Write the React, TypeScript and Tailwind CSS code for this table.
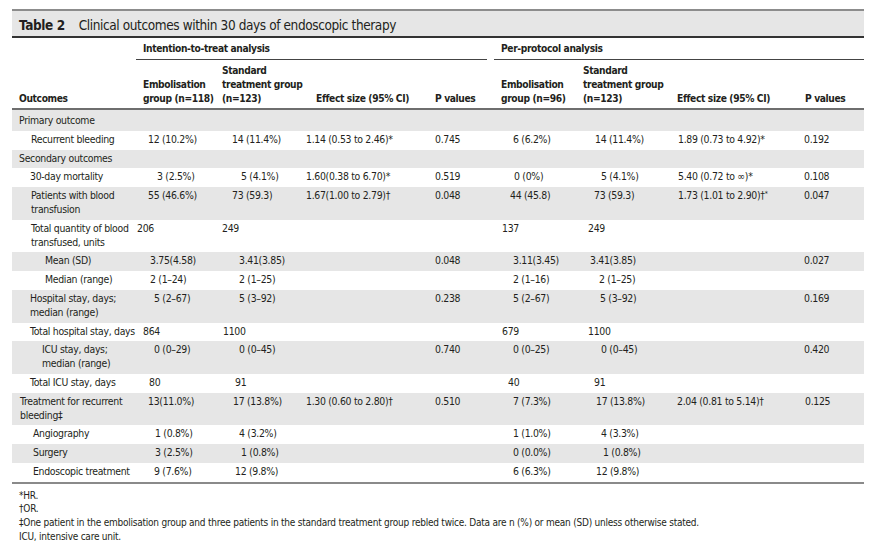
import React from "react";

type Cell = [string, string];
type Row = { g: boolean; cells: Cell[] };

const GRID = "grid grid-cols-[124px_82px_88px_124px_64px_84px_94px_128px_64px]";

const E: Cell = ["", "pl-0"];

const rows: Row[] = [
  {
    g: false,
    cells: [
      ["Recurrent bleeding", "pl-[19px]"],
      ["12 (10.2%)", "pl-[12px]"],
      ["14 (11.4%)", "pl-[14px]"],
      ["1.14 (0.53 to 2.46)*", "pl-0"],
      ["0.745", "pl-[5px]"],
      ["6 (6.2%)", "pl-[19px]"],
      ["14 (11.4%)", "pl-[17px]"],
      ["1.89 (0.73 to 4.92)*", "pl-[6px]"],
      ["0.192", "pl-[4px]"],
    ],
  },
  { g: true, cells: [["Secondary outcomes", "pl-[7px]"], E, E, E, E, E, E, E, E] },
  {
    g: false,
    cells: [
      ["30-day mortality", "pl-[18px]"],
      ["3 (2.5%)", "pl-[21px]"],
      ["5 (4.1%)", "pl-[23px]"],
      ["1.60(0.38 to 6.70)*", "pl-0"],
      ["0.519", "pl-[5px]"],
      ["0 (0%)", "pl-[20px]"],
      ["5 (4.1%)", "pl-[23px]"],
      ["5.40 (0.72 to \u221e)*", "pl-[6px]"],
      ["0.108", "pl-[4px]"],
    ],
  },
  {
    g: true,
    cells: [
      ["Patients with blood\ntransfusion", "pl-[19px]"],
      ["55 (46.6%)", "pl-[12px]"],
      ["73 (59.3)", "pl-[14px]"],
      ["1.67(1.00 to 2.79)\u2020", "pl-0"],
      ["0.048", "pl-[5px]"],
      ["44 (45.8)", "pl-[16px]"],
      ["73 (59.3)", "pl-[16px]"],
      ["1.73 (1.01 to 2.90)\u2020^*", "pl-[6px]"],
      ["0.047", "pl-[4px]"],
    ],
  },
  {
    g: false,
    cells: [
      ["Total quantity of blood\ntransfused, units", "pl-[19px]"],
      ["206", "pl-[1px]"],
      ["249", "pl-[4px]"],
      E,
      E,
      ["137", "pl-[8px]"],
      ["249", "pl-[10px]"],
      E,
      E,
    ],
  },
  {
    g: true,
    cells: [
      ["Mean (SD)", "pl-[33px]"],
      ["3.75(4.58)", "pl-[14px]"],
      ["3.41(3.85)", "pl-[21px]"],
      E,
      ["0.048", "pl-[5px]"],
      ["3.11(3.45)", "pl-[19px]"],
      ["3.41(3.85)", "pl-[12px]"],
      E,
      ["0.027", "pl-[4px]"],
    ],
  },
  {
    g: false,
    cells: [
      ["Median (range)", "pl-[33px]"],
      ["2 (1\u201324)", "pl-[14px]"],
      ["2 (1\u201325)", "pl-[21px]"],
      E,
      E,
      ["2 (1\u201316)", "pl-[19px]"],
      ["2 (1\u201325)", "pl-[21px]"],
      E,
      E,
    ],
  },
  {
    g: true,
    cells: [
      ["Hospital stay, days;\nmedian (range)", "pl-[18px]"],
      ["5 (2\u201367)", "pl-[18px]"],
      ["5 (3\u201392)", "pl-[21px]"],
      E,
      ["0.238", "pl-[5px]"],
      ["5 (2\u201367)", "pl-[19px]"],
      ["5 (3\u201392)", "pl-[22px]"],
      E,
      ["0.169", "pl-[4px]"],
    ],
  },
  {
    g: false,
    cells: [
      ["Total hospital stay, days", "pl-[18px]"],
      ["864", "pl-[7px]"],
      ["1100", "pl-[5px]"],
      E,
      E,
      ["679", "pl-[8px]"],
      ["1100", "pl-[10px]"],
      E,
      E,
    ],
  },
  {
    g: true,
    cells: [
      ["ICU stay, days;\nmedian (range)", "pl-[30px]"],
      ["0 (0\u201329)", "pl-[18px]"],
      ["0 (0\u201345)", "pl-[21px]"],
      E,
      ["0.740", "pl-[5px]"],
      ["0 (0\u201325)", "pl-[19px]"],
      ["0 (0\u201345)", "pl-[23px]"],
      E,
      ["0.420", "pl-[4px]"],
    ],
  },
  {
    g: false,
    cells: [
      ["Total ICU stay, days", "pl-[18px]"],
      ["80", "pl-[13px]"],
      ["91", "pl-[17px]"],
      E,
      E,
      ["40", "pl-[14px]"],
      ["91", "pl-[16px]"],
      E,
      E,
    ],
  },
  {
    g: true,
    cells: [
      ["Treatment for recurrent\nbleeding\u2021", "pl-[8px]"],
      ["13(11.0%)", "pl-[12px]"],
      ["17 (13.8%)", "pl-[15px]"],
      ["1.30 (0.60 to 2.80)\u2020", "pl-0"],
      ["0.510", "pl-[5px]"],
      ["7 (7.3%)", "pl-[19px]"],
      ["17 (13.8%)", "pl-[18px]"],
      ["2.04 (0.81 to 5.14)\u2020", "pl-[5px]"],
      ["0.125", "pl-[5px]"],
    ],
  },
  {
    g: false,
    cells: [
      ["Angiography", "pl-[21px]"],
      ["1 (0.8%)", "pl-[19px]"],
      ["4 (3.2%)", "pl-[21px]"],
      E,
      E,
      ["1 (1.0%)", "pl-[19px]"],
      ["4 (3.3%)", "pl-[23px]"],
      E,
      E,
    ],
  },
  {
    g: true,
    cells: [
      ["Surgery", "pl-[21px]"],
      ["3 (2.5%)", "pl-[19px]"],
      ["1 (0.8%)", "pl-[23px]"],
      E,
      E,
      ["0 (0.0%)", "pl-[19px]"],
      ["1 (0.8%)", "pl-[25px]"],
      E,
      E,
    ],
  },
  {
    g: false,
    cells: [
      ["Endoscopic treatment", "pl-[21px]"],
      ["9 (7.6%)", "pl-[18px]"],
      ["12 (9.8%)", "pl-[17px]"],
      E,
      E,
      ["6 (6.3%)", "pl-[19px]"],
      ["12 (9.8%)", "pl-[18px]"],
      E,
      E,
    ],
  },
];

function CellText({ t }: { t: string }) {
  if (t.includes("^")) {
    const [a, b] = t.split("^");
    return (
      <>
        {a}
        <sup className="text-[7px]">{b}</sup>
      </>
    );
  }
  return <>{t}</>;
}

const headers: Cell[] = [
  ["Outcomes", "pl-[7px]"],
  ["Embolisation\ngroup (n=118)", "pl-[7px]"],
  ["Standard\ntreatment group\n(n=123)", "pl-[4px]"],
  ["Effect size (95% CI)", "pl-[10px]"],
  ["P values", "pl-[5px]"],
  ["Embolisation\ngroup (n=96)", "pl-[7px]"],
  ["Standard\ntreatment group\n(n=123)", "pl-[5px]"],
  ["Effect size (95% CI)", "pl-[5px]"],
  ["P values", "pl-[5px]"],
];

export default function App() {
  return (
    <div className="w-[880px] h-[547px] bg-white pt-[9px] pl-[12px] text-[#231f20] font-['DejaVu_Sans_Condensed','DejaVu_Sans',sans-serif] overflow-hidden">
      <div className="w-[852px]">
        <div className="h-[29px] border-t-2 border-t-[#8c8c8c] border-b-2 border-b-[#333333] bg-[#e6e6e6] flex items-center pl-[7px] pt-[3px] text-[13.5px] leading-[18px] tracking-[-0.4px] whitespace-nowrap">
          <span className="font-bold">Table 2</span>
          <span className="ml-[14px]">Clinical outcomes within 30 days of endoscopic therapy</span>
        </div>
        <div className="flex h-[22px] text-[10.2px] leading-[14px] tracking-[-0.37px] font-bold">
          <div className="w-[124px]" />
          <div className="w-[351px] border-b border-[#444444] pl-[7px] pt-[4px] whitespace-nowrap">
            Intention-to-treat analysis
          </div>
          <div className="w-[7px]" />
          <div className="w-[370px] border-b border-[#444444] pl-[7px] pt-[4px] whitespace-nowrap">
            Per-protocol analysis
          </div>
        </div>
        <div className={`${GRID} items-end pt-[4px] pb-[2px] border-b-2 border-[#6e6e6e] text-[10.2px] leading-[14px] tracking-[-0.37px] font-bold`}>
          {headers.map(([t, pad], i) => (
            <div key={i} className={`${pad} whitespace-pre`}>
              {t}
            </div>
          ))}
        </div>
        <div className={`${GRID} bg-[#e6e6e6] text-[10.4px] leading-[13.8px] tracking-[-0.3px]`}>
          <div className="pl-[7px] pt-[4px] pb-[3px] whitespace-pre">Primary outcome</div>
        </div>
        {rows.map((r, ri) => (
          <div key={ri} className={`${GRID} ${r.g ? "bg-[#e6e6e6]" : "bg-white"} text-[10.4px] leading-[13.8px] tracking-[-0.3px]`}>
            {r.cells.map(([t, pad], ci) => (
              <div key={ci} className={`${pad} pt-[2px] pb-[3px] whitespace-pre`}>
                <CellText t={t} />
              </div>
            ))}
          </div>
        ))}
        <div className="border-t-2 border-[#8a8a8a]" />
        <div className="pl-[7px] pt-[5px] text-[10px] leading-[13.7px] tracking-[-0.23px] whitespace-nowrap">
          <div>*HR.</div>
          <div>{"\u2020"}OR.</div>
          <div>
            {"\u2021"}One patient in the embolisation group and three patients in the standard treatment group rebled twice. Data are n (%) or mean (SD) unless otherwise stated.
          </div>
          <div>ICU, intensive care unit.</div>
        </div>
      </div>
    </div>
  );
}
